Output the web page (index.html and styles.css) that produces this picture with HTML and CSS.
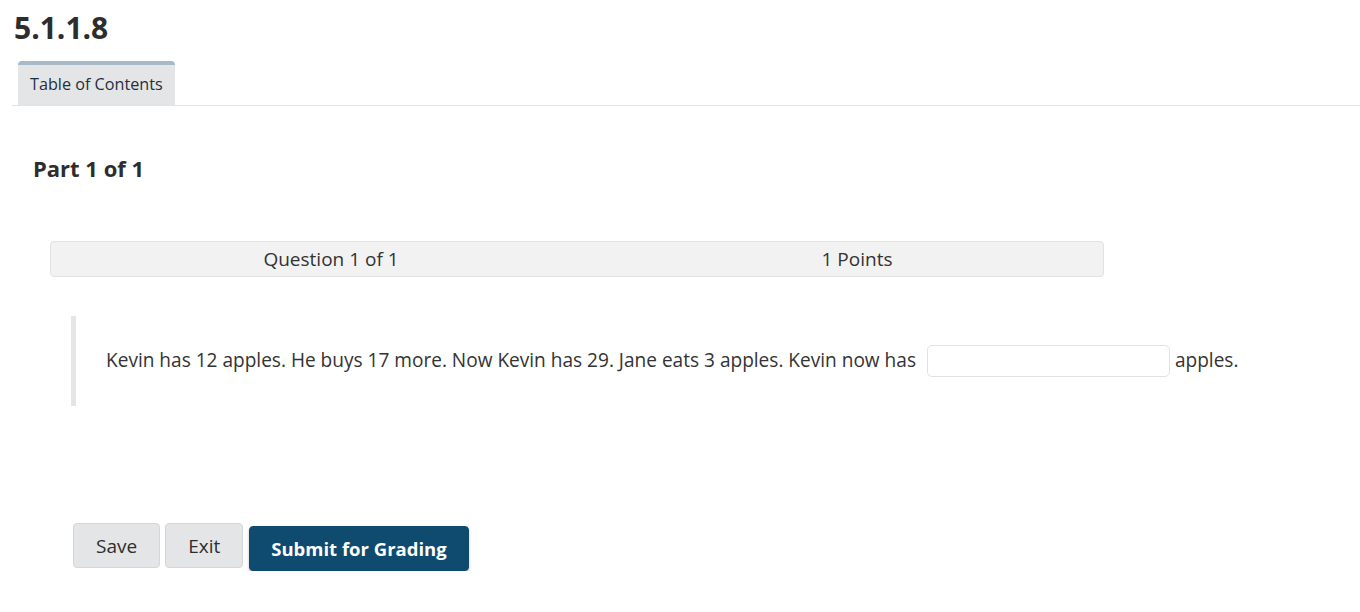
FILE: index.html
```html
<!DOCTYPE html>
<html lang="en">
<head>
<meta charset="utf-8">
<title>5.1.1.8</title>
<link rel="stylesheet" href="styles.css">
</head>
<body>
<div class="page">
  <h1 class="title">5.1.1.8</h1>
  <div class="tabs">
    <div class="tab">Table of Contents</div>
  </div>
  <div class="content">
    <h2 class="part">Part 1 of 1</h2>
    <div class="qbar">
      <div class="qcell">Question 1 of 1</div>
      <div class="qcell">1 Points</div>
    </div>
    <div class="question">
      <p class="qtext">Kevin has 12 apples. He buys 17 more. Now Kevin has 29. Jane eats 3 apples. Kevin now has <input class="answer" type="text" aria-label="answer">apples.</p>
    </div>
    <div class="actions">
      <button class="btn btn-plain">Save</button>
      <button class="btn btn-plain">Exit</button>
      <button class="btn btn-primary">Submit for Grading</button>
    </div>
  </div>
</div>
</body>
</html>
```
FILE: styles.css
```css
html, body {
  margin: 0;
  padding: 0;
  background: #ffffff;
}
body {
  font-family: "Open Sans", "Liberation Sans", sans-serif;
  color: #333333;
}
.page {
  padding-left: 12px;
}
.title {
  margin: 0;
  padding: 8px 0 0 2px;
  font-size: 30px;
  line-height: 40px;
  font-weight: 700;
  color: #2d2d2d;
}
.tabs {
  margin-top: 13px;
  border-bottom: 1px solid #e3e3e3;
  display: flex;
  padding-left: 6px;
}
.tab {
  background: #e4e5e7;
  border-top: 4px solid #a8bac7;
  border-radius: 4px 4px 0 0;
  padding: 0 12px;
  height: 40px;
  line-height: 38px;
  font-size: 16.2px;
  color: #1f2f3d;
}
.content {
  padding-left: 21px;
}
.part {
  margin: 48px 0 0 0;
  font-size: 22px;
  line-height: 28px;
  font-weight: 700;
  color: #2d2d2d;
}
.qbar {
  margin: 59px 0 0 17px;
  width: 1035px;
  height: 34px;
  background: #f2f2f2;
  border: 1px solid #e2e2e2;
  border-radius: 4px;
  display: grid;
  grid-template-columns: 526px 526px;
  padding-left: 17px;
}
.qcell {
  text-align: center;
  font-size: 19px;
  line-height: 34px;
  color: #333333;
  white-space: nowrap;
}
.question {
  margin: 39px 0 0 38px;
  border-left: 5px solid #e4e5e7;
  height: 90px;
  display: flex;
  align-items: center;
  padding-left: 30px;
}
.qtext {
  margin: 0;
  font-size: 19.07px;
  line-height: 32px;
  color: #333333;
}
.answer {
  width: 243px;
  height: 32px;
  box-sizing: border-box;
  border: 1px solid #e2e2e2;
  border-radius: 5px;
  margin: 0 5px 0 6px;
  vertical-align: middle;
  font-family: inherit;
  font-size: 18px;
  position: relative;
  top: -1px;
}
.actions {
  margin: 117px 0 0 40px;
  display: flex;
  align-items: flex-start;
  gap: 5px;
}
.btn {
  font-family: "Open Sans", "Liberation Sans", sans-serif;
  font-size: 19px;
  border-radius: 4px;
  cursor: pointer;
}
.btn-plain {
  background: #e4e5e7;
  border: 1px solid #d5d6d8;
  color: #2d2d2d;
  height: 45px;
  padding: 0 22px;
}
.btn-primary {
  margin-left: 1px;
  margin-top: 3px;
  background: #0f4a6f;
  border: 1px solid #0f4a6f;
  color: #ffffff;
  font-size: 18.5px;
  font-weight: 700;
  height: 45px;
  padding: 0 21px;
  box-shadow: 0 2px 3px rgba(0, 0, 0, 0.25);
}
```
